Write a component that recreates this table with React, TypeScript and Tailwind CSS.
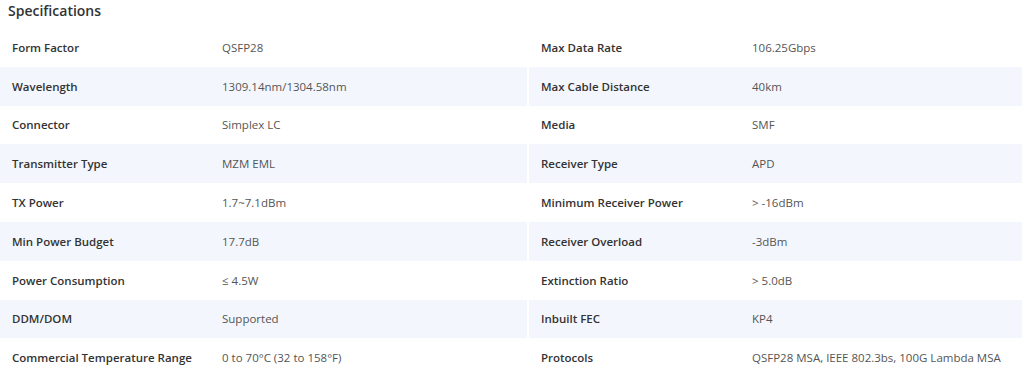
const left: [string, string][] = [
  ["Form Factor", "QSFP28"],
  ["Wavelength", "1309.14nm/1304.58nm"],
  ["Connector", "Simplex LC"],
  ["Transmitter Type", "MZM EML"],
  ["TX Power", "1.7~7.1dBm"],
  ["Min Power Budget", "17.7dB"],
  ["Power Consumption", "≤ 4.5W"],
  ["DDM/DOM", "Supported"],
  ["Commercial Temperature Range", "0 to 70°C (32 to 158°F)"],
];

const right: [string, string][] = [
  ["Max Data Rate", "106.25Gbps"],
  ["Max Cable Distance", "40km"],
  ["Media", "SMF"],
  ["Receiver Type", "APD"],
  ["Minimum Receiver Power", "> -16dBm"],
  ["Receiver Overload", "-3dBm"],
  ["Extinction Ratio", "> 5.0dB"],
  ["Inbuilt FEC", "KP4"],
  ["Protocols", "QSFP28 MSA, IEEE 802.3bs, 100G Lambda MSA"],
];

function SpecTable({ rows, labelWidth }: { rows: [string, string][]; labelWidth: string }) {
  return (
    <div className="flex flex-col">
      {rows.map(([label, value], i) => (
        <div
          key={label}
          className={`flex items-center h-[38.8px] ${i % 2 === 1 ? "bg-[#f3f7fd]" : "bg-white"}`}
        >
          <div className={`${labelWidth} shrink-0 pl-3 text-[11.5px] font-semibold text-[#333]`}>{label}</div>
          <div className="flex-1 text-[11.5px] text-[#555]">{value}</div>
        </div>
      ))}
    </div>
  );
}

export default function App() {
  return (
    <div className="w-[1024px] h-[384px] bg-white overflow-hidden font-['Open_Sans',sans-serif]">
      <h2 className="h-[28px] pl-2 text-[14px] font-semibold text-[#333] leading-[22px]">
        Specifications
      </h2>
      <div className="flex gap-[2px] w-[1022px]">
        <div className="w-[527px]">
          <SpecTable rows={left} labelWidth="w-[222px]" />
        </div>
        <div className="flex-1">
          <SpecTable rows={right} labelWidth="w-[223px]" />
        </div>
      </div>
    </div>
  );
}
